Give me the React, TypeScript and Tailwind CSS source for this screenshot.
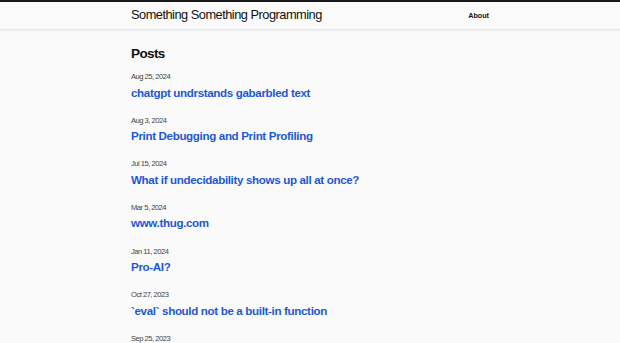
import React from "react";

const posts = [
  { date: "Aug 25, 2024", title: "chatgpt undrstands gabarbled text" },
  { date: "Aug 3, 2024", title: "Print Debugging and Print Profiling" },
  { date: "Jul 15, 2024", title: "What if undecidability shows up all at once?" },
  { date: "Mar 5, 2024", title: "www.thug.com" },
  { date: "Jan 11, 2024", title: "Pro-AI?" },
  { date: "Oct 27, 2023", title: "`eval` should not be a built-in function" },
  { date: "Sep 25, 2023", title: "Scripting with types" },
];

export default function App() {
  return (
    <div
      className="min-h-screen bg-[#fafafa] text-[#111]"
      style={{ fontFamily: '"Liberation Sans", Arial, sans-serif' }}
    >
      <div className="h-[2px] bg-[#1a1a1a]" />
      <header className="border-b border-[#e6e6e6] bg-[#fbfbfb] shadow-[0_1px_1px_rgba(0,0,0,0.03)]">
        <div className="mx-auto flex h-[27px] w-[358px] items-center justify-between">
          <a className="text-[12.8px] leading-none tracking-[-0.5px] text-[#111]">
            Something Something Programming
          </a>
          <a className="text-[7.2px] font-bold leading-none text-[#111]">About</a>
        </div>
      </header>

      <main className="mx-auto w-[358px] pt-[13.5px]">
        <h1 className="text-[13.5px] font-bold leading-[20px] tracking-[-0.6px]">Posts</h1>
        <ul className="mt-[8.5px]">
          {posts.map((p) => (
            <li key={p.date} className="mb-[15.17px]">
              <div className="text-[7.6px] leading-[10px] tracking-[-0.5px] text-[#444]">{p.date}</div>
              <a className="mt-[2.5px] block text-[11.6px] font-bold leading-[16px] tracking-[-0.35px] text-[#1d58d8]">
                {p.title}
              </a>
            </li>
          ))}
        </ul>
      </main>
    </div>
  );
}
